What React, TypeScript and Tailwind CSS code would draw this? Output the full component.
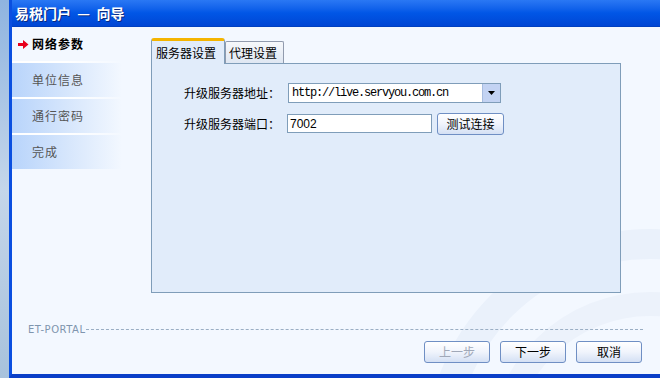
import React from "react";

const cjk = { fontFamily: "'Noto Sans CJK SC', 'Noto Sans', sans-serif" };

function NavItem({ label, active, sep = true }: { label: string; active?: boolean; sep?: boolean }) {
  return (
    <div className="flex flex-col">
      <div
        className={
          "h-[34px] flex items-center text-[12px] " +
          (active ? "bg-transparent" : "bg-gradient-to-r from-[#b8d4fb] via-[#d6e6fc] to-[#f3f8ff]")
        }
      >
        {active ? (
          <div className="flex items-center pl-[6px] gap-[3px]">
            <svg width="11" height="9" viewBox="0 0 11 9">
              <path d="M0 3 H5 V0 L10.5 4.5 L5 9 V6 H0 Z" fill="#e8001c" />
            </svg>
            <span className="font-bold text-black tracking-[1px]">{label}</span>
          </div>
        ) : (
          <span className="pl-[20px] text-[#555] tracking-[1px]">{label}</span>
        )}
      </div>
      {sep && <div className="h-[2px] bg-gradient-to-r from-white via-white to-[#f3f8ff]" />}
    </div>
  );
}

function XPButton({ label, disabled, w = "w-[66px]" }: { label: string; disabled?: boolean; w?: string }) {
  return (
    <div
      className={
        w +
        " h-[22px] rounded-[3px] border border-[#6f8fc4] bg-gradient-to-b from-white via-[#f0f4fc] to-[#d4e0f4] flex items-center justify-center text-[12px] " +
        (disabled ? "text-[#a0a8b8]" : "text-black")
      }
    >
      {label}
    </div>
  );
}

export default function App() {
  return (
    <div className="w-[660px] h-[378px] flex overflow-hidden" style={cjk}>
      <div className="w-[9px] h-full bg-gradient-to-b from-[#8fb4e0] via-[#c4d6ea] to-[#a8c2dc]" />
      <div className="flex-1 flex flex-col border-l-[3px] border-l-[#0a4fe0] border-b-[4px] border-b-[#0a3fc8]">
        <div className="h-[27px] bg-gradient-to-b from-[#2a78f4] via-[#0156e6] to-[#0046d4] border-b border-b-[#0040c0] flex items-center pl-[3px]">
          <span className="text-white font-bold text-[14px] [text-shadow:1px_1px_0_#0a2a80]">易税门户&nbsp;&nbsp;—&nbsp;&nbsp;向导</span>
        </div>
        <div className="relative flex-1 bg-[#f3f8ff] flex flex-col overflow-hidden">
          <svg className="absolute right-0 bottom-0" width="260" height="220" viewBox="0 0 260 220">
            <circle cx="250" cy="300" r="210" fill="none" stroke="#eaf1fb" strokeWidth="30" />
            <circle cx="250" cy="300" r="150" fill="none" stroke="#ecf2fb" strokeWidth="24" />
          </svg>
          <div className="relative flex h-[266px]">
            <div className="w-[110px] flex flex-col">
              <NavItem label="网络参数" active />
              <NavItem label="单位信息" />
              <NavItem label="通行密码" />
              <NavItem label="完成" sep={false} />
            </div>
            <div className="ml-[29px] pt-[10px] flex flex-col w-[470px]">
              <div className="flex items-end h-[26px]">
                <div className="w-[74px] h-[26px] border border-[#7f9db9] border-b-0 border-t-[3px] border-t-[#f4b400] rounded-t-[3px] bg-[#e1ecfa] flex items-center pl-[4px] text-[12px] text-black relative z-10 -mb-px">
                  服务器设置
                </div>
                <div className="w-[59px] h-[22px] border border-[#919bae] border-b-0 rounded-t-[2px] bg-gradient-to-b from-[#f6f8fb] to-[#dfe7f2] flex items-center pl-[3px] text-[12px] text-black">
                  代理设置
                </div>
              </div>
              <div className="h-[230px] border border-[#7f9db9] bg-[#e1ecfa] flex flex-col pt-[18px] pl-[32px] gap-[10px]">
                <div className="flex items-center h-[21px]">
                  <span className="w-[104px] text-[12px] text-black">升级服务器地址：</span>
                  <div className="w-[213px] h-[20px] border border-[#7f9db9] bg-white flex items-center justify-between">
                    <span className="pl-[3px] text-[12px] tracking-[-1.2px] text-black" style={{ fontFamily: "'Liberation Mono', monospace" }}>
                      http://live.servyou.com.cn
                    </span>
                    <div className="w-[18px] h-full bg-[#c3d3f3] border-l border-[#a8bde0] flex items-center justify-center">
                      <svg width="7" height="4" viewBox="0 0 7 4"><path d="M0 0 H7 L3.5 4 Z" fill="#000" /></svg>
                    </div>
                  </div>
                </div>
                <div className="flex items-center h-[21px]">
                  <span className="w-[103px] text-[12px] text-black">升级服务器端口：</span>
                  <div className="w-[145px] h-[19px] border border-[#7f9db9] bg-white flex items-center pl-[2px] text-[12px] text-black" style={{ fontFamily: "'Liberation Sans', sans-serif" }}>
                    7002
                  </div>
                  <div className="ml-[5px]">
                    <XPButton label="测试连接" w="w-[67px]" />
                  </div>
                </div>
              </div>
            </div>
          </div>
          <div className="relative flex items-center pl-[16px] pr-[17px] mt-[30px] h-[12px]">
            <span className="text-[10px] text-[#7f95ae] tracking-[0.5px]" style={{ fontFamily: "'DejaVu Sans', sans-serif" }}>ET-PORTAL</span>
            <div className="flex-1 border-t border-dashed border-[#9aaec4] ml-[1px]" />
          </div>
          <div className="relative flex justify-end gap-[10px] pr-[18px] mt-[6px]">
            <XPButton label="上一步" disabled />
            <XPButton label="下一步" />
            <XPButton label="取消" />
          </div>
        </div>
      </div>
    </div>
  );
}
